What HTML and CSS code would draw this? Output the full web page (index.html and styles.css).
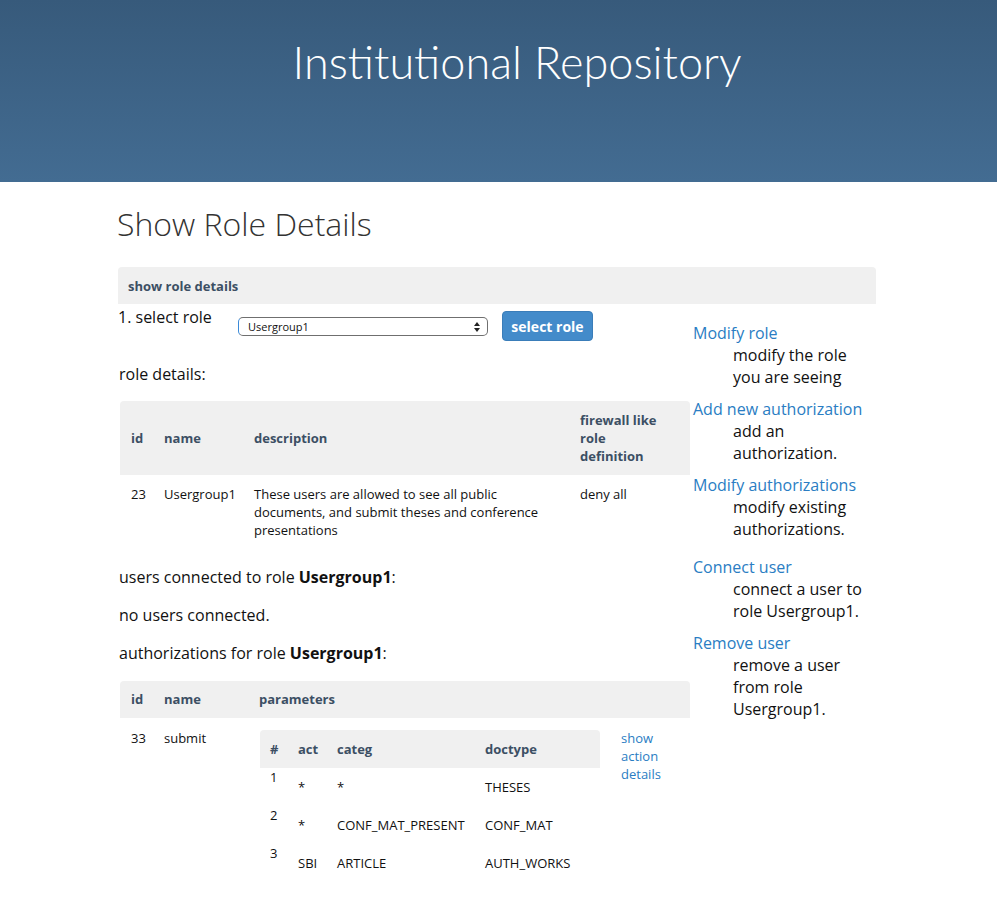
FILE: index.html
```html
<!DOCTYPE html>
<html>
<head>
<meta charset="utf-8">
<title>Show Role Details</title>
<link rel="stylesheet" href="styles.css">
</head>
<body>
<header class="site-header">
  <div class="site-title">Institutional Repository</div>
</header>
<main class="container">
  <h1 class="page-title">Show Role Details</h1>
  <div class="panel-bar">show role details</div>
  <div class="columns">
    <div class="main-col">
      <form class="select-row">
        <span class="select-label">1. select role</span>
        <span class="select-wrap">
          <select class="role-select"><option>Usergroup1</option></select>
          <span class="select-arrows"><span class="up"></span><span class="down"></span></span>
        </span>
        <button type="button" class="btn">select role</button>
      </form>
      <p class="para first">role details:</p>
      <table class="data role-table">
        <colgroup><col class="c-id"><col class="c-name"><col class="c-desc"><col class="c-fw"></colgroup>
        <thead>
          <tr><th>id</th><th>name</th><th>description</th><th class="fw">firewall like role definition</th></tr>
        </thead>
        <tbody>
          <tr><td>23</td><td>Usergroup1</td><td>These users are allowed to see all public documents, and submit theses and conference presentations</td><td>deny all</td></tr>
        </tbody>
      </table>
      <p class="para after-table">users connected to role <b>Usergroup1</b>:</p>
      <p class="para">no users connected.</p>
      <p class="para third">authorizations for role <b>Usergroup1</b>:</p>
      <table class="data auth-table">
        <colgroup><col class="a-id"><col class="a-name"><col class="a-par"><col class="a-link"></colgroup>
        <thead>
          <tr><th>id</th><th>name</th><th colspan="2">parameters</th></tr>
        </thead>
        <tbody>
          <tr>
            <td>33</td>
            <td>submit</td>
            <td class="inner-cell">
              <table class="inner">
                <colgroup><col class="i-n"><col class="i-act"><col class="i-cat"><col class="i-doc"></colgroup>
                <thead><tr><th>#</th><th>act</th><th>categ</th><th>doctype</th></tr></thead>
                <tbody>
                  <tr><td class="num">1</td><td>*</td><td>*</td><td>THESES</td></tr>
                  <tr><td class="num">2</td><td>*</td><td>CONF_MAT_PRESENT</td><td>CONF_MAT</td></tr>
                  <tr><td class="num">3</td><td>SBI</td><td>ARTICLE</td><td>AUTH_WORKS</td></tr>
                </tbody>
              </table>
            </td>
            <td><a href="#" class="small-link">show action details</a></td>
          </tr>
        </tbody>
      </table>
    </div>
    <aside class="side-col">
      <dl class="actions">
        <dt><a href="#">Modify role</a></dt>
        <dd>modify the role you are seeing</dd>
        <dt><a href="#">Add new authorization</a></dt>
        <dd>add an authorization.</dd>
        <dt><a href="#">Modify authorizations</a></dt>
        <dd class="extra">modify existing authorizations.</dd>
        <dt><a href="#">Connect user</a></dt>
        <dd>connect a user to role Usergroup1.</dd>
        <dt><a href="#">Remove user</a></dt>
        <dd>remove a user from role Usergroup1.</dd>
      </dl>
    </aside>
  </div>
</main>
</body>
</html>
```

FILE: styles.css
```css
html, body {
  margin: 0;
  padding: 0;
}
body {
  font-family: "Open Sans", "Liberation Sans", sans-serif;
  font-size: 16px;
  line-height: 22px;
  color: #111;
  background: #fff;
}
a {
  color: #2a7dc3;
  text-decoration: none;
}
.site-header {
  height: 182px;
  box-sizing: border-box;
  padding-top: 35px;
  background: linear-gradient(to bottom, #375a7b, #436c92);
}
.site-title {
  font-family: Lato, "Open Sans", sans-serif;
  font-weight: 300;
  font-size: 45px;
  line-height: 54px;
  color: #fff;
  text-align: center;
  padding-left: 37px;
}
.container {
  width: 758px;
  margin: 0 0 0 118px;
}
.page-title {
  font-family: "Open Sans", "Liberation Sans", sans-serif;
  font-weight: 300;
  font-size: 32px;
  line-height: 40px;
  color: #333;
  margin: 22px 0 23px -1px;
}
.panel-bar {
  background: #f0f0f0;
  border-radius: 4px 4px 0 0;
  font-size: 13px;
  font-weight: 700;
  line-height: 17px;
  padding: 11px 10px 9px;
  color: #3c4f64;
}
.columns {
  display: flex;
}
.main-col {
  width: 575px;
  flex: none;
}
.side-col {
  flex: 1;
  padding-top: 18px;
}
.select-row {
  display: flex;
  align-items: flex-start;
  margin: 2px 0 0 0;
  height: 36px;
}
.select-label {
  width: 120px;
  flex: none;
}
.select-wrap {
  position: relative;
  margin-top: 11px;
  width: 250px;
  height: 19px;
  flex: none;
}
.role-select {
  -webkit-appearance: none;
  appearance: none;
  display: block;
  width: 250px;
  height: 19px;
  box-sizing: border-box;
  font-family: "Open Sans", "Liberation Sans", sans-serif;
  font-size: 11px;
  line-height: 17px;
  border: 1px solid #6f6f6f;
  border-left-color: #3b8ad8;
  border-radius: 5px;
  padding: 0 0 0 9px;
  background: #fff;
  color: #111;
}
.select-arrows {
  position: absolute;
  right: 8px;
  top: 5px;
  width: 6px;
  height: 10px;
  pointer-events: none;
}
.select-arrows .up,
.select-arrows .down {
  display: block;
  width: 0;
  height: 0;
  border-left: 3px solid transparent;
  border-right: 3px solid transparent;
}
.select-arrows .up {
  border-bottom: 4px solid #222;
  margin-bottom: 2px;
}
.select-arrows .down {
  border-top: 4px solid #222;
}
.btn {
  margin: 5px 0 0 14px;
  width: 91px;
  height: 30px;
  border: 1px solid #3a7db9;
  border-radius: 4px;
  background: #438bca;
  color: #fff;
  font-family: "Open Sans", "Liberation Sans", sans-serif;
  font-weight: 700;
  font-size: 14px;
  padding: 0;
}
.para {
  margin: 16px 0 16px 1px;
}
.para.first {
  margin-top: 21px;
}
.para.after-table {
  margin-top: 17px;
}
.para.third {
  margin-top: 16px;
  margin-bottom: 17px;
}
.data {
  border-collapse: collapse;
  table-layout: fixed;
  width: 570px;
  margin-left: 2px;
  font-size: 13px;
  line-height: 18px;
}
.data th {
  background: #f0f0f0;
  color: #3c4f64;
  font-weight: 700;
  text-align: left;
  padding: 10px 11px;
  vertical-align: middle;
}
.data thead th:first-child { border-top-left-radius: 4px; }
.data thead th:last-child { border-top-right-radius: 4px; }
.data td {
  padding: 10px 11px;
  vertical-align: top;
}
.c-id { width: 33px; }
.c-name { width: 90px; }
.c-desc { width: 326px; }
.c-fw { width: 121px; }
.role-table th.fw { padding-right: 30px; }
.auth-table th {
  padding-top: 9px;
  padding-bottom: 10px;
}
.a-id { width: 33px; }
.a-name { width: 95px; }
.a-par { width: 362px; }
.a-link { width: 80px; }
.auth-table td {
  padding-top: 11px;
}
.auth-table td.inner-cell {
  padding: 12px 11px 8px 12px;
}
.inner {
  border-collapse: collapse;
  table-layout: fixed;
  width: 340px;
}
.i-n { width: 28px; }
.i-act { width: 39px; }
.i-cat { width: 148px; }
.i-doc { width: 125px; }
.inner th {
  padding: 10px 10px;
  background: #f0f0f0;
}
.inner thead th:first-child { border-top-left-radius: 4px; }
.inner thead th:last-child { border-top-right-radius: 4px; }
.inner td {
  padding: 10px 10px 10px 10px;
  vertical-align: top;
  white-space: nowrap;
}
.inner td.num {
  padding-top: 0;
  padding-bottom: 20px;
}
.small-link {
  display: block;
  font-size: 13px;
  line-height: 18px;
}
.actions {
  margin: 0;
}
.actions dt {
  margin: 0;
}
.actions dd {
  margin: 0 0 10px 40px;
}
.actions dd.extra {
  margin-bottom: 16px;
}
```
